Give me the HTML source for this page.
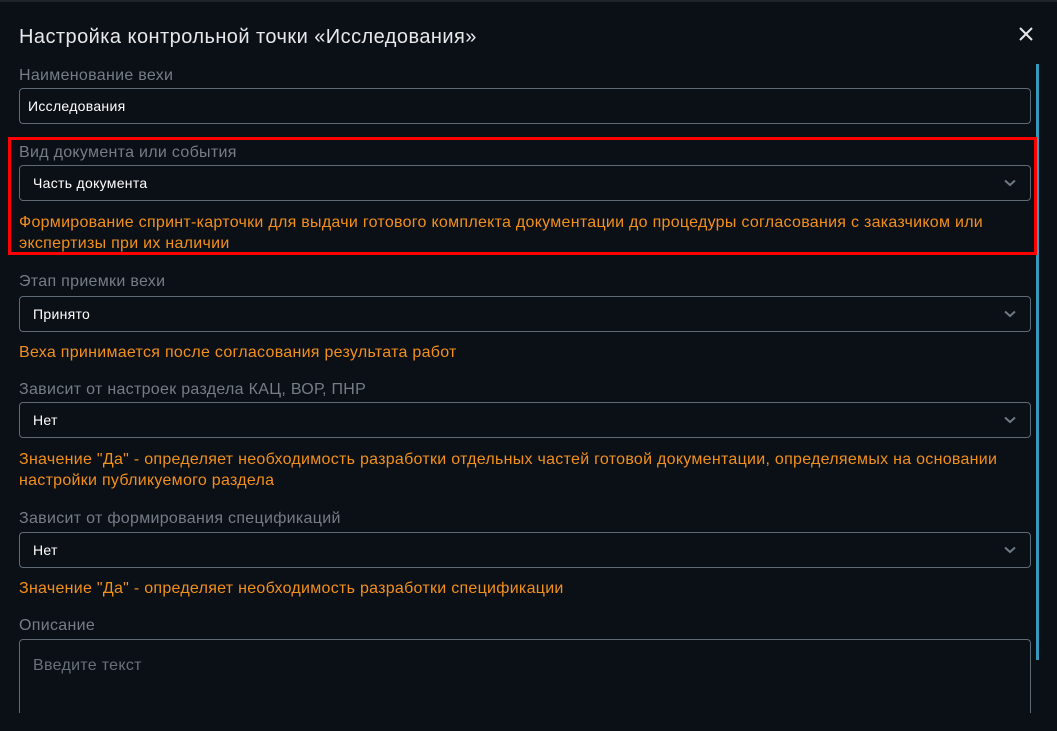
<!DOCTYPE html>
<html><head><meta charset="utf-8"><style>
*{margin:0;padding:0;box-sizing:border-box}
body{width:1057px;height:731px;background:#0b0f16;overflow:hidden;position:relative;font-family:"Liberation Sans","DejaVu Sans",sans-serif}
.top{position:absolute;left:0;top:0;width:1057px;height:2px;background:#1f242b}
.a{position:absolute;white-space:nowrap}
.t{left:19px;top:26px;font-size:20px;color:#e6e8ea;letter-spacing:0.45px}
.l{left:19px;font-size:16px;color:#767d86;line-height:20px;letter-spacing:0.3px}
.box{position:absolute;left:19px;width:1012px;height:36px;border:1px solid #5f6a75;border-radius:4px}
.v{position:absolute;font-size:14px;color:#fff;top:9px;line-height:17px;letter-spacing:0.3px}
.o{left:19px;font-size:16px;color:#f2901c;line-height:21px;letter-spacing:0.28px}
.ch{position:absolute;right:14px;top:13px}
</style></head><body>
<div class="top"></div>
<div class="a t">Настройка контрольной точки «Исследования»</div>
<svg class="a" style="left:1019px;top:27px" width="14" height="14" viewBox="0 0 14 14"><path d="M1 1L13 13M13 1L1 13" stroke="#e6e8ea" stroke-width="2"/></svg>
<div class="a" style="left:1036px;top:64px;width:3px;height:596px;background:#3898bb"></div>

<div class="a l" style="top:66px">Наименование вехи</div>
<div class="box" style="top:88px"><div class="v" style="left:8px">Исследования</div></div>

<div class="a" style="left:8px;top:137px;width:1029px;height:118px;border:3px solid #ff0000"></div>
<div class="a l" style="top:143px">Вид документа или события</div>
<div class="box" style="top:165px"><div class="v" style="left:13px">Часть документа</div><svg class="ch" width="12" height="8" viewBox="0 0 12 8"><path d="M1 1.5L6 6L11 1.5" fill="none" stroke="#6f7a85" stroke-width="2"/></svg></div>
<div class="a o" style="top:212px">Формирование спринт-карточки для выдачи готового комплекта документации до процедуры согласования с заказчиком или<br>экспертизы при их наличии</div>

<div class="a l" style="top:272px">Этап приемки вехи</div>
<div class="box" style="top:296px"><div class="v" style="left:13px">Принято</div><svg class="ch" width="12" height="8" viewBox="0 0 12 8"><path d="M1 1.5L6 6L11 1.5" fill="none" stroke="#6f7a85" stroke-width="2"/></svg></div>
<div class="a o" style="top:342px">Веха принимается после согласования результата работ</div>

<div class="a l" style="top:380px">Зависит от настроек раздела КАЦ, ВОР, ПНР</div>
<div class="box" style="top:402px"><div class="v" style="left:13px">Нет</div><svg class="ch" width="12" height="8" viewBox="0 0 12 8"><path d="M1 1.5L6 6L11 1.5" fill="none" stroke="#6f7a85" stroke-width="2"/></svg></div>
<div class="a o" style="top:449px">Значение "Да" - определяет необходимость разработки отдельных частей готовой документации, определяемых на основании<br>настройки публикуемого раздела</div>

<div class="a l" style="top:509px">Зависит от формирования спецификаций</div>
<div class="box" style="top:532px"><div class="v" style="left:13px">Нет</div><svg class="ch" width="12" height="8" viewBox="0 0 12 8"><path d="M1 1.5L6 6L11 1.5" fill="none" stroke="#6f7a85" stroke-width="2"/></svg></div>
<div class="a o" style="top:578px">Значение "Да" - определяет необходимость разработки спецификации</div>

<div class="a l" style="top:616px">Описание</div>
<div class="a" style="left:19px;top:639px;width:1012px;height:74px;border:1px solid #5f6a75;border-bottom:none;border-radius:4px 4px 0 0"></div>
<div class="a" style="left:33px;top:657px;font-size:16px;color:#6a7079;letter-spacing:0.3px">Введите текст</div>
</body></html>
